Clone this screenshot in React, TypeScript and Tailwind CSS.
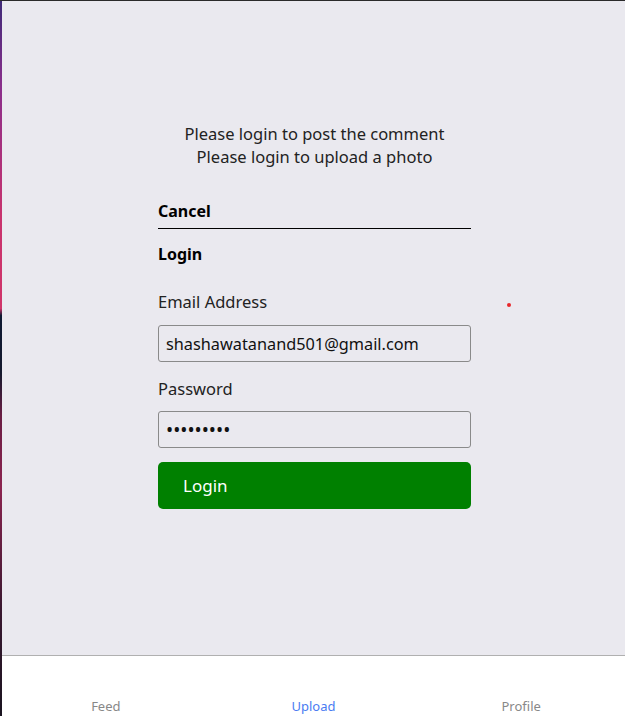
export default function App() {
  return (
    <div
      className="relative flex h-[716px] w-[625px] flex-col overflow-hidden bg-[#eae9ef] border-t border-[#2a2a2a]"
      style={{ fontFamily: '"Noto Sans", "Open Sans", sans-serif' }}
    >
      {/* left window edge strip */}
      <div className="absolute left-0 top-0 h-full w-[2px] bg-[linear-gradient(to_bottom,#3f2a78_0%,#8a2f8c_12%,#c8336e_30%,#d0356a_43%,#0f1a33_44%,#151a2e_52%,#6a1e44_58%,#8c2450_68%,#3a1830_85%,#1a1420_100%)]" />

      <div className="flex flex-1 flex-col items-center pl-[4px] pt-[121px]">
        <div className="text-center text-[16.5px] leading-[23px] text-[#222]">
          <p>Please login to post the comment</p>
          <p>Please login to upload a photo</p>
        </div>

        <div className="mt-[32px] flex w-[313px] flex-col">
          <div className="border-b border-black pb-[6px] text-[16px] font-bold leading-[22px] text-black">
            Cancel
          </div>
          <div className="mt-[14px] text-[16px] font-bold leading-[22px] text-black">Login</div>

          <label className="mt-[26px] text-[16.5px] leading-[22px] text-[#222]">Email Address</label>
          <input
            readOnly
            value="shashawatanand501@gmail.com"
            className="mt-[12px] h-[37px] rounded-[3px] border border-[#8a8a8a] bg-transparent px-[7px] text-[16.3px] text-[#111] outline-none"
          />

          <label className="mt-[16px] text-[16.5px] leading-[22px] text-[#222]">Password</label>
          <input
            readOnly
            type="password"
            value="123456789"
            className="mt-[11px] h-[37px] rounded-[3px] border border-[#8a8a8a] bg-transparent px-[7px] text-[19px] text-[#111] outline-none"
          />

          <button className="mt-[14px] h-[47px] rounded-[5px] bg-[#008000] pl-[25px] text-left text-[17px] text-white">
            Login
          </button>
        </div>
      </div>

      <div className="absolute left-[507px] top-[302px] h-[4px] w-[4px] rounded-full bg-[#e8262a]" />

      <nav className="grid h-[61px] grid-cols-3 border-t border-[#b0b0b0] bg-white pl-[2px] text-[13px]">
        <span className="self-end text-center text-[#888]">Feed</span>
        <span className="self-end text-center text-[#4a7cf2]">Upload</span>
        <span className="self-end text-center text-[#888]">Profile</span>
      </nav>
    </div>
  );
}
